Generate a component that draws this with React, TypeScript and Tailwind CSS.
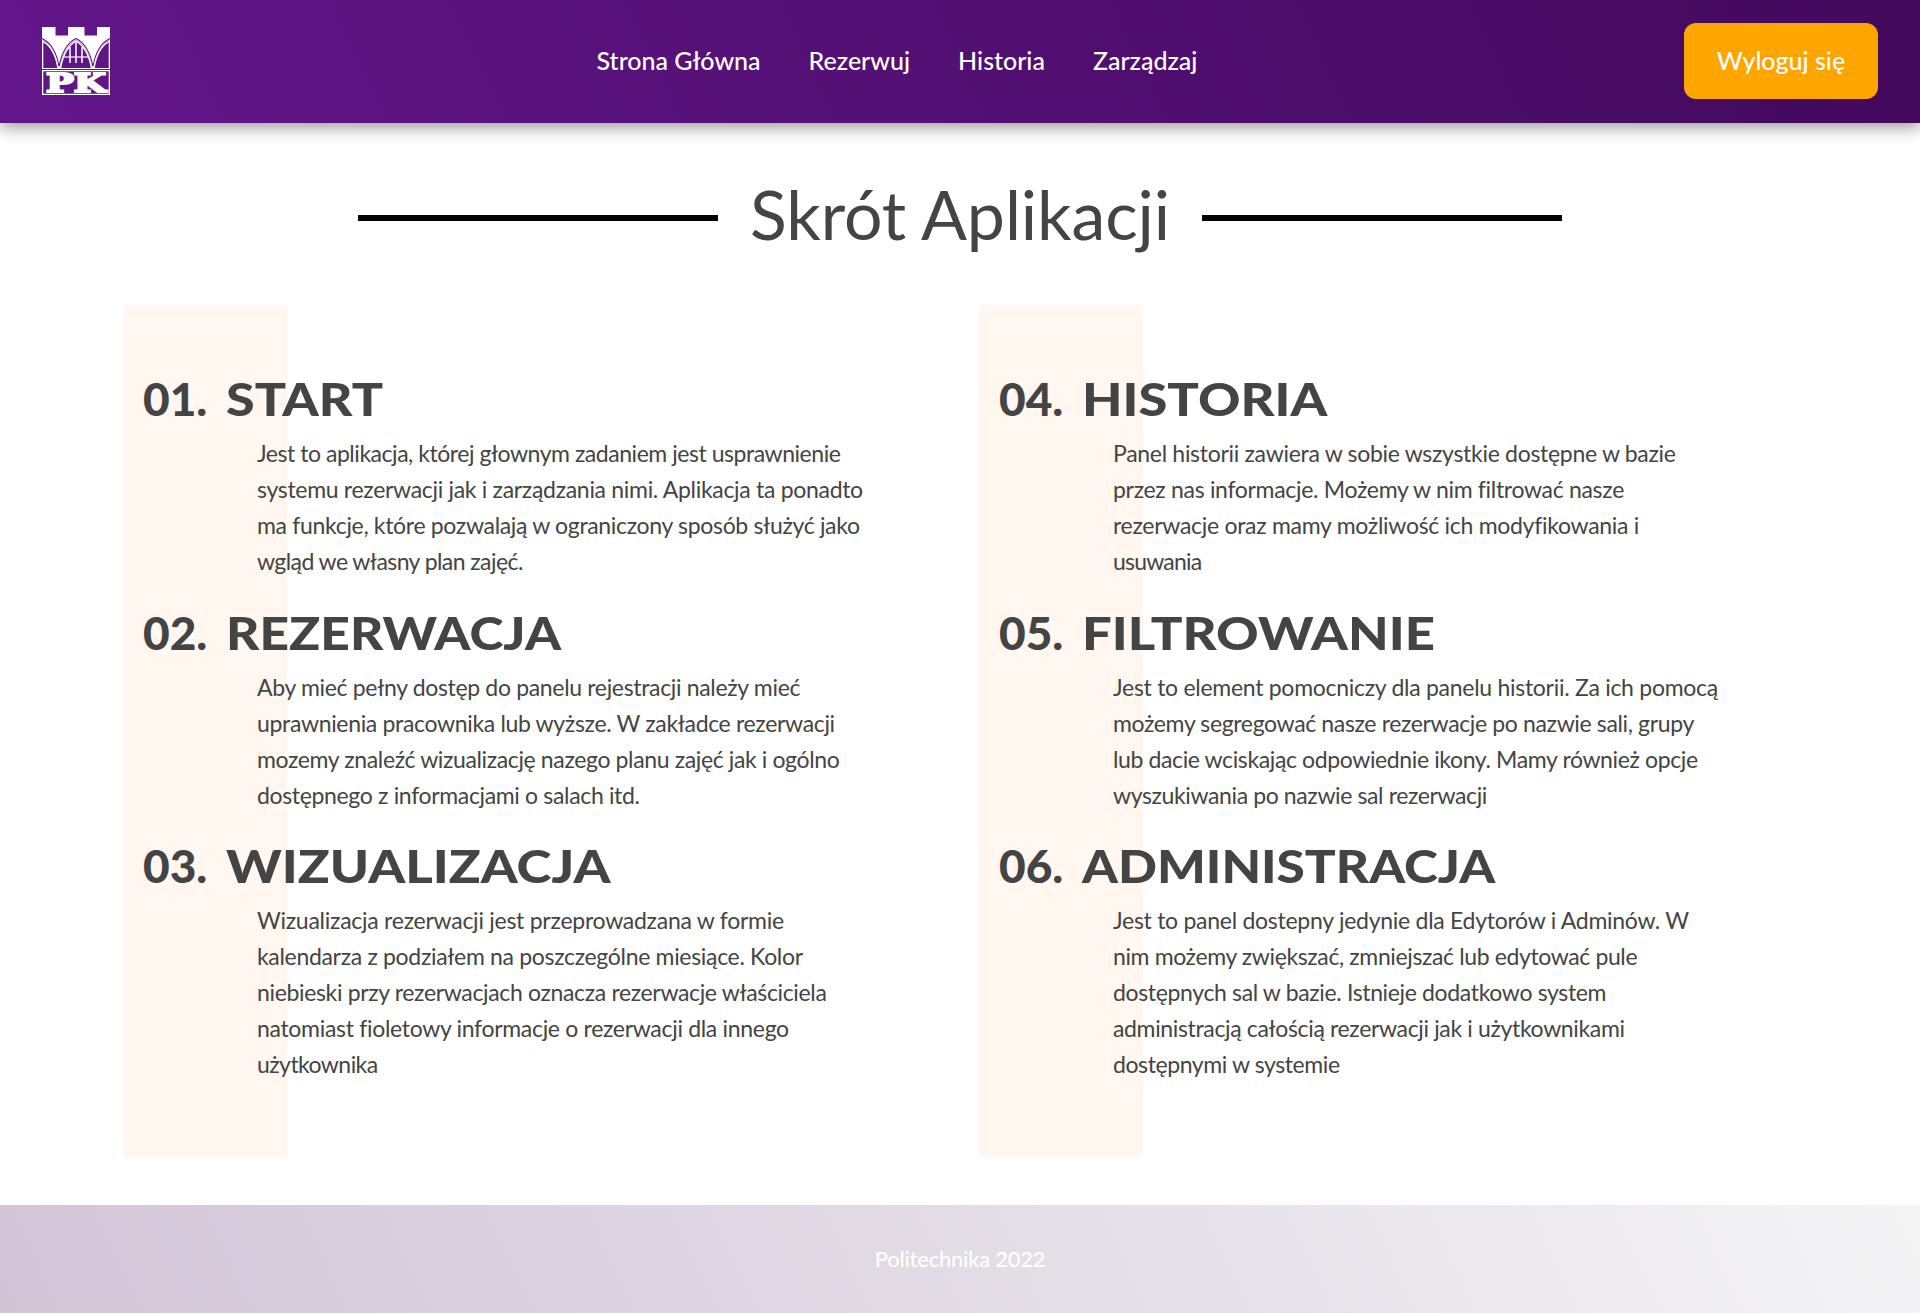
type Line = { text: string; tracking: string };
type Section = { no: string; title: string; stretch: string; lines: Line[] };

const leftSections: Section[] = [
  {
    no: "01.",
    title: "START",
    stretch: "scale-x-[1.13]",
    lines: [
      { text: "Jest to aplikacja, której głownym zadaniem jest usprawnienie", tracking: "tracking-[-0.462px]" },
      { text: "systemu rezerwacji jak i zarządzania nimi. Aplikacja ta ponadto", tracking: "tracking-[-0.307px]" },
      { text: "ma funkcje, które pozwalają w ograniczony sposób służyć jako", tracking: "tracking-[-0.322px]" },
      { text: "wgląd we własny plan zajęć.", tracking: "tracking-[-0.57px]" },
    ],
  },
  {
    no: "02.",
    title: "REZERWACJA",
    stretch: "scale-x-[1.12]",
    lines: [
      { text: "Aby mieć pełny dostęp do panelu rejestracji należy mieć", tracking: "tracking-[-0.33px]" },
      { text: "uprawnienia pracownika lub wyższe. W zakładce rezerwacji", tracking: "tracking-[-0.334px]" },
      { text: "mozemy znaleźć wizualizację nazego planu zajęć jak i ogólno", tracking: "tracking-[-0.37px]" },
      { text: "dostępnego z informacjami o salach itd.", tracking: "tracking-[-0.34px]" },
    ],
  },
  {
    no: "03.",
    title: "WIZUALIZACJA",
    stretch: "scale-x-[1.147]",
    lines: [
      { text: "Wizualizacja rezerwacji jest przeprowadzana w formie", tracking: "tracking-[-0.26px]" },
      { text: "kalendarza z podziałem na poszczególne miesiące. Kolor", tracking: "tracking-[-0.32px]" },
      { text: "niebieski przy rezerwacjach oznacza rezerwacje właściciela", tracking: "tracking-[-0.346px]" },
      { text: "natomiast fioletowy informacje o rezerwacji dla innego", tracking: "tracking-[-0.31px]" },
      { text: "użytkownika", tracking: "tracking-[-0.56px]" },
    ],
  },
];

const rightSections: Section[] = [
  {
    no: "04.",
    title: "HISTORIA",
    stretch: "scale-x-[1.14]",
    lines: [
      { text: "Panel historii zawiera w sobie wszystkie dostępne w bazie", tracking: "tracking-[-0.3px]" },
      { text: "przez nas informacje. Możemy w nim filtrować nasze", tracking: "tracking-[-0.31px]" },
      { text: "rezerwacje oraz mamy możliwość ich modyfikowania i", tracking: "tracking-[-0.29px]" },
      { text: "usuwania", tracking: "tracking-[-0.8px]" },
    ],
  },
  {
    no: "05.",
    title: "FILTROWANIE",
    stretch: "scale-x-[1.145]",
    lines: [
      { text: "Jest to element pomocniczy dla panelu historii. Za ich pomocą", tracking: "tracking-[-0.28px]" },
      { text: "możemy segregować nasze rezerwacje po nazwie sali, grupy", tracking: "tracking-[-0.36px]" },
      { text: "lub dacie wciskając odpowiednie ikony. Mamy również opcje", tracking: "tracking-[-0.38px]" },
      { text: "wyszukiwania po nazwie sal rezerwacji", tracking: "tracking-[-0.38px]" },
    ],
  },
  {
    no: "06.",
    title: "ADMINISTRACJA",
    stretch: "scale-x-[1.115]",
    lines: [
      { text: "Jest to panel dostepny jedynie dla Edytorów i Adminów. W", tracking: "tracking-[-0.27px]" },
      { text: "nim możemy zwiększać, zmniejszać lub edytować pule", tracking: "tracking-[-0.38px]" },
      { text: "dostępnych sal w bazie. Istnieje dodatkowo system", tracking: "tracking-[-0.35px]" },
      { text: "administracją całością rezerwacji jak i użytkownikami", tracking: "tracking-[-0.35px]" },
      { text: "dostępnymi w systemie", tracking: "tracking-[-0.4px]" },
    ],
  },
];

function Logo() {
  return (
    <svg className="overflow-visible" width="68" height="68" viewBox="0 0 68 68" fill="none">
      {/* battlements and wall */}
      <path d="M0 0H13.5V8.5H26V0H42.5V8.5H55V0H68V42H0Z" fill="#fff" />
      {/* side spans */}
      <path d="M1.3 13.5C8.5 17 13.5 26 16.2 41H1.3Z" fill="#5f1585" />
      <path d="M66.7 13.5C59.5 17 54.5 26 51.8 41H66.7Z" fill="#5f1585" />
      {/* main span */}
      <path d="M17.8 41C20.5 27 26 17.5 34 13C42 17.5 47.5 27 50.2 41Z" fill="#5f1585" />
      <path d="M0 11.5C9 15.5 14.5 26 17 39.5C19.8 26 25 16 34 11.6C43 16 48.2 26 51 39.5C53.5 26 59 15.5 68 11.5" stroke="#5f1585" strokeWidth="1.1" />
      <path d="M1 14.600C8 18 13.500 27 16 41M67 14.600C60 18 54.500 27 52 41M18.500 41C21 28 26.500 18.500 34 14C41.500 18.500 47 28 49.500 41" stroke="#fff" strokeWidth="1.4" />
      <path d="M21.500 30H46.500" stroke="#fff" strokeWidth="1.2" />
      <path d="M28 20V36M34 15V36M40 20V36" stroke="#fff" strokeWidth="1.5" />
      {/* name plate */}
      <path d="M.65 43.700H67.350V67.350H.65Z" fill="#5f1585" stroke="#fff" strokeWidth="1.3" />
      <text
        x="4"
        y="64.5"
        textLength="60"
        lengthAdjust="spacingAndGlyphs"
        fontFamily="DejaVu Serif, serif"
        fontWeight="700"
        fontSize="25.500"
        fill="#fff"
        stroke="#fff"
        strokeWidth="2"
      >
        PK
      </text>
    </svg>
  );
}

function Column({ sections }: { sections: Section[] }) {
  return (
    <section className="h-[852px] w-[818px] bg-[linear-gradient(to_right,#fff7f0_163.6px,transparent_163.6px)] px-5 pt-[58px]">
      {sections.map((s) => (
        <article key={s.no} className="mb-[17.6px]">
          <h2 className="flex h-[72px] items-center text-[46px] font-black leading-[72px]">
            <span className="w-[82.5px]">{s.no}</span>
            <span className={`inline-block origin-left whitespace-nowrap ${s.stretch}`}>{s.title}</span>
          </h2>
          <p className="pl-[114px] text-[23px] leading-9">
            {s.lines.map((l) => (
              <span key={l.text} className={`block whitespace-nowrap ${l.tracking}`}>
                {l.text}
              </span>
            ))}
          </p>
        </article>
      ))}
    </section>
  );
}

export default function App() {
  return (
    <div className="h-[1314px] overflow-hidden bg-white font-['Lato',sans-serif] text-[#444]">
      <header className="flex h-[123px] items-center justify-between bg-[linear-gradient(65deg,#63168a,#42095c)] px-[42px] pb-0.5 text-[25px] font-medium text-white shadow-[0_5px_15px_rgba(0,0,0,0.38)]">
        <Logo />
        <nav className="flex gap-12">
          <a>Strona Główna</a>
          <a>Rezerwuj</a>
          <a>Historia</a>
          <a>Zarządzaj</a>
        </nav>
        <button className="h-[76px] w-[194px] rounded-xl bg-[#ffa500] font-medium">Wyloguj się</button>
      </header>

      <main className="h-[1082px]">
        <div className="flex h-[182px] items-center justify-center gap-8 pt-2">
          <span className="h-1.5 w-[360px] bg-black" />
          <h1 className="w-[420px] whitespace-nowrap pb-2 text-center text-[68px] leading-[82px] tracking-[-0.1px]">Skrót Aplikacji</h1>
          <span className="h-1.5 w-[360px] bg-black" />
        </div>
        <div className="flex gap-[38px] px-[123px]">
          <Column sections={leftSections} />
          <Column sections={rightSections} />
        </div>
      </main>

      <footer className="flex h-[108px] items-center justify-center bg-[linear-gradient(65deg,#d1c4d7,#f4f4f5)] pb-0.5 text-[22px] font-medium tracking-[-0.26px] text-white">
        Politechnika 2022
      </footer>
    </div>
  );
}
